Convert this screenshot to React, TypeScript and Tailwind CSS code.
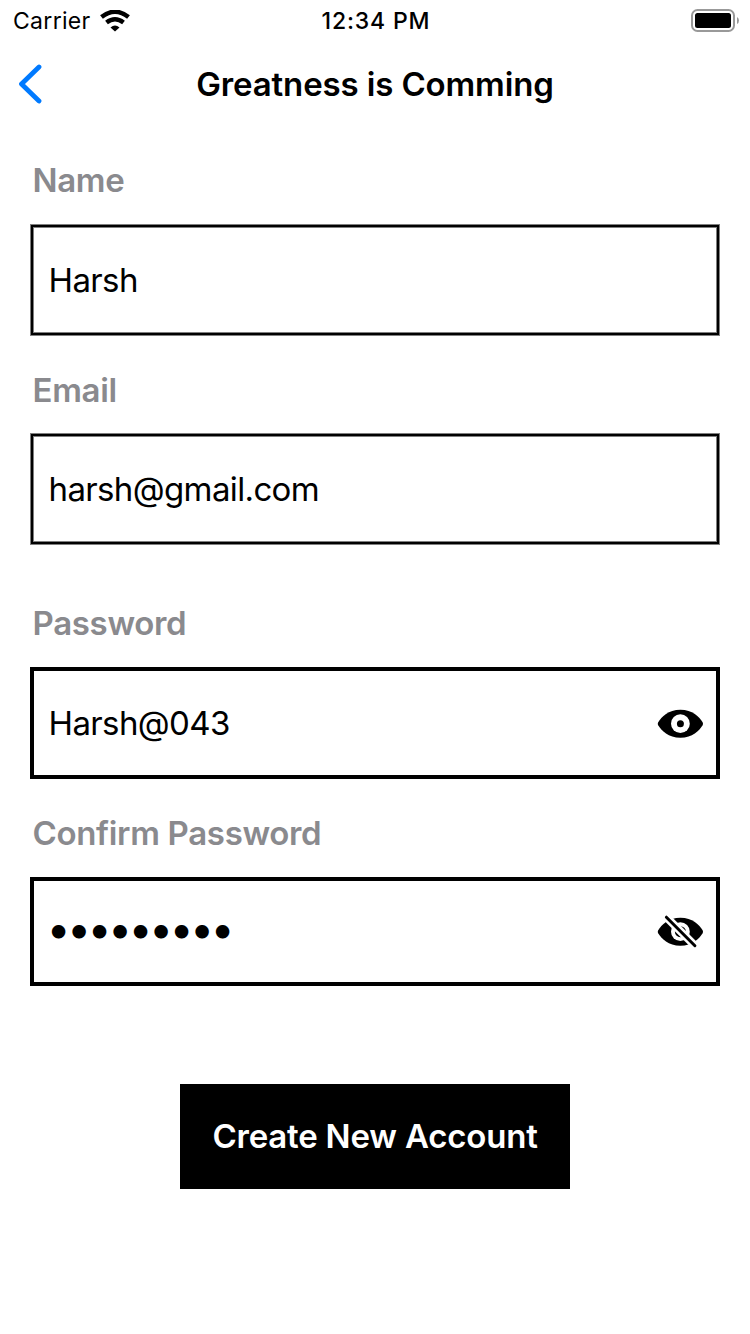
import type { ReactNode } from "react";

type FieldProps = { label: string; value: string; icon?: ReactNode; className: string; boxClass: string; textClass?: string };

function Field({ label, value, icon, className, boxClass, textClass = "pt-[2px] text-[33px] tracking-[-0.63px]" }: FieldProps) {
  return (
    <div className={className}>
      <div className="h-[44px] pl-[2.5px] text-[33px] leading-[44px] font-semibold tracking-[-0.33px] text-[#8a8a8e]">{label}</div>
      <div className={`flex items-center justify-between ${boxClass}`}>
        <span className={textClass}>{value}</span>
        {icon}
      </div>
    </div>
  );
}

const thin = "h-[112px] border border-[#7f7f7f] pl-[17.5px] pr-[14px] shadow-[inset_0_0_0_2px_#000,inset_0_0_0_3px_#7f7f7f]";
const thick = "mt-[22px] h-[112px] border-4 border-black pl-[14.5px] pr-[13px]";
const thickShort = "mt-[22px] h-[109px] border-4 border-black pl-[12.5px] pr-[13px]";

function Eye({ off }: { off?: boolean }) {
  return (
    <svg width="46" height="35" viewBox="0 0 46 35" className="block">
      <g transform="translate(0.4 0.2)">
        <path d="M23 3.500C11 3.500 4 10.500 .8 16Q0 17.500 .8 19C4 24.500 11 31.500 23 31.500s19-7 22.200-12.500Q46 17.500 45.200 16C42 10.500 35 3.500 23 3.500Z" />
        <circle cx="23" cy="17.500" r="9.400" fill="white" />
        <circle cx="23" cy="17.500" r={off ? 5.5 : 3.5} />
        {off && <path d="M8.500 2.500L38 32" stroke="white" strokeWidth="8" />}
        {off && <path d="M9 3L37.500 31.500" stroke="black" strokeWidth="3" strokeLinecap="round" />}
      </g>
    </svg>
  );
}

export default function App() {
  return (
    <main className="h-[1334px] w-[750px] bg-white font-['Inter',sans-serif] text-black">
      <header className="grid h-[41px] grid-cols-3 items-center pt-px pl-[13px] pr-[11px] text-[23px]">
        <div className="flex items-center gap-[9px] tracking-[0.3px]">
          Carrier
          <svg width="30" height="22" viewBox="0 0 30 22" fill="none" stroke="black">
            <path d="M1.500 7Q15-3.500 28.500 7" strokeWidth="4.500" />
            <path d="M6.500 12.500Q15 6 23.500 12.500" strokeWidth="4.500" />
            <path d="M10.500 17.500Q15 13.500 19.500 17.500L15 21.500Z" fill="black" stroke="none" />
          </svg>
        </div>
        <div className="text-center font-medium tracking-[0.85px]">12:34 PM</div>
        <svg className="-mt-px justify-self-end" width="48" height="24" viewBox="0 0 48 24">
          <rect x="1" y="1" width="42" height="21" rx="5.500" fill="none" stroke="#999" strokeWidth="2" />
          <rect x="4" y="4" width="36" height="15" rx="2.500" />
          <path d="M46 8Q48 9 48 11.500T46 15Z" fill="#999" />
        </svg>
      </header>
      <nav className="grid h-[87px] grid-cols-[40px_1fr_40px] items-center px-[18px]">
        <svg className="-mt-px" width="24" height="40" viewBox="0 0 24 40">
          <path d="M21 3L3.500 20L21 37" fill="none" stroke="#007aff" strokeWidth="4.800" strokeLinecap="round" strokeLinejoin="round" />
        </svg>
        <h1 className="pt-px text-center text-[33px] font-semibold tracking-[-0.13px]">Greatness is Comming</h1>
      </nav>
      <form className="px-[30px] pt-[30px]">
        <Field label="Name" value="Harsh" className="h-[210px]" boxClass={`mt-[22px] ${thin}`} />
        <Field label="Email" value="harsh@gmail.com" className="h-[233px]" boxClass={`mt-[21px] ${thin}`} />
        <Field label="Password" value="Harsh@043" className="h-[210px]" boxClass={thick} icon={<Eye />} />
        <Field label="Confirm Password" value="•••••••••" className="h-[273px]" boxClass={thickShort} icon={<Eye off />} textClass="pb-[6px] text-[43px] leading-none tracking-[-3.7px]" />
        <button type="button" className="mx-auto block h-[105px] w-[390px] bg-black text-center text-[33px] font-semibold tracking-[-0.2px] text-white">
          Create New Account
        </button>
      </form>
    </main>
  );
}
